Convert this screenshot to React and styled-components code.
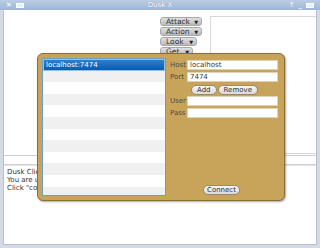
import React from 'react';
import styled, { createGlobalStyle } from 'styled-components';

const Global = createGlobalStyle`
  html, body { margin: 0; padding: 0; background: #dde3ec; }
  body { font-family: "DejaVu Sans", "Liberation Sans", sans-serif; }
`;

const Frame = styled.div`
  width: 320px;
  height: 248px;
  display: flex;
  flex-direction: column;
  position: relative;
  overflow: hidden;
  background: #d3dae5;
`;

const TitleBar = styled.div`
  height: 10px;
  display: flex;
  align-items: center;
  padding: 0 4px;
  background: linear-gradient(#bccde4, #9eb5d5);
  color: #fff;
  font-size: 7px;
`;

const TitleIcons = styled.div`
  display: flex;
  gap: 4px;
  width: 40px;
  justify-content: ${p => (p.right ? 'flex-end' : 'flex-start')};
  align-items: center;
  padding: 0 2px;
`;

const TitleText = styled.div`
  flex: 1;
  text-align: center;
  text-shadow: 0 0 1px #6d84a6;
`;

const Glyph = styled.span`
  font-size: 7px;
  line-height: 7px;
  color: #fff;
`;

const WinBox = styled.span`
  width: 8px;
  height: 5px;
  border: 1px solid #fff;
  background: #e9eef6;
  box-sizing: border-box;
`;

const Body = styled.div`
  flex: 1;
  background: #fff;
  margin: 0 3px 3px 3px;
  border: 1px solid #b8c0cc;
  border-top: none;
  display: flex;
  flex-direction: column;
`;

const Top = styled.div`
  height: 144px;
  display: grid;
  grid-template-columns: 156px 46px 1fr;
`;

const MenuCol = styled.div`
  display: flex;
  flex-direction: column;
  gap: 1px;
  padding-top: 7px;
`;

const MenuButton = styled.div`
  width: ${p => p.w}px;
  height: 9px;
  border-radius: 3px;
  background: linear-gradient(#e2e2e2, #b9b9b9);
  border: 1px solid #a8a8a8;
  box-sizing: border-box;
  display: flex;
  align-items: center;
  justify-content: space-between;
  padding: 0 3px 0 5px;
  font-size: 7.5px;
  color: #333;
`;

const Arrow = styled.span`
  font-size: 5px;
  color: #222;
`;

const SideText = styled.div`
  margin: 6px 0 0 4px;
  border: 1px solid #d8d8d8;
  border-right: none;
  background: #fff;
`;

const InputLine = styled.div`
  height: 8px;
  margin-top: 1px;
  border-top: 1px solid #d0d0d0;
  border-bottom: 1px solid #d0d0d0;
`;

const Log = styled.div`
  flex: 1;
  padding: 2px 3px;
  font-size: 7px;
  line-height: 8px;
  color: #333;
  border-top: 1px solid #e4e4e4;
`;

const Dialog = styled.div`
  position: absolute;
  left: 37px;
  top: 53px;
  width: 248px;
  height: 148px;
  box-sizing: border-box;
  background: #c8a45b;
  border: 1px solid #8c6d36;
  border-radius: 6px;
  box-shadow: 1px 1px 2px rgba(0, 0, 0, 0.35);
  display: grid;
  grid-template-columns: 124px 1fr;
  gap: 4px;
  padding: 4px 6px 4px 4px;
`;

const List = styled.div`
  background: #fff;
  border: 1px solid #6d9dc4;
  display: flex;
  flex-direction: column;
  overflow: hidden;
`;

const Row = styled.div`
  height: 11.6px;
  flex: none;
  font-size: 7px;
  line-height: 10px;
  padding-left: 2px;
  color: ${p => (p.selected ? '#fff' : '#333')};
  background: ${p =>
    p.selected ? 'linear-gradient(#2c7fd0, #0a5bb0)' : p.odd ? '#f0f0f0' : '#fff'};
  border: ${p => (p.selected ? '1px solid #8fc0ee' : 'none')};
  box-sizing: border-box;
`;

const Form = styled.div`
  display: flex;
  flex-direction: column;
  padding-top: 2px;
`;

const Field = styled.div`
  display: flex;
  align-items: center;
  height: 10px;
  margin-bottom: ${p => p.mb || 2}px;
`;

const Label = styled.span`
  width: 17px;
  font-size: 7px;
  color: #4a4a4a;
`;

const Input = styled.div`
  flex: 1;
  height: 10px;
  box-sizing: border-box;
  background: #fff;
  border: 1px solid #e2d3b0;
  font-size: 7px;
  line-height: 8px;
  padding-left: 2px;
  color: #333;
`;

const ButtonRow = styled.div`
  display: flex;
  gap: 1px;
  padding-left: 21px;
  margin: 1px 0 1px;
`;

const Pill = styled.div`
  height: 10px;
  padding: 0 ${p => p.px || 4}px;
  border-radius: 5px;
  box-sizing: border-box;
  background: linear-gradient(#f7f7f7, #d9d9d9);
  border: 1px solid #9c8a66;
  font-size: 7px;
  line-height: 8px;
  color: #333;
  text-align: center;
`;

const Spacer = styled.div`
  flex: 1;
`;

const ConnectRow = styled.div`
  display: flex;
  padding-left: 33px;
  margin-bottom: 1px;
`;

const rows = Array.from({ length: 12 });

export default function App() {
  return (
    <Frame>
      <Global />
      <TitleBar>
        <TitleIcons>
          <Glyph>✕</Glyph>
          <WinBox />
        </TitleIcons>
        <TitleText>Dusk X</TitleText>
        <TitleIcons right>
          <Glyph>↑</Glyph>
          <Glyph>_</Glyph>
          <WinBox />
        </TitleIcons>
      </TitleBar>
      <Body>
        <Top>
          <div />
          <MenuCol>
            <MenuButton w={42}>Attack<Arrow>▼</Arrow></MenuButton>
            <MenuButton w={42}>Action<Arrow>▼</Arrow></MenuButton>
            <MenuButton w={37}>Look<Arrow>▼</Arrow></MenuButton>
            <MenuButton w={33}>Get<Arrow>▼</Arrow></MenuButton>
          </MenuCol>
          <SideText />
        </Top>
        <InputLine />
        <Log>
          Dusk Client<br />
          You are using Dusk X<br />
          Click "connect" to start
        </Log>
      </Body>
      <Dialog>
        <List>
          {rows.map((_, i) => (
            <Row key={i} selected={i === 0} odd={i % 2 === 1}>
              {i === 0 ? 'localhost:7474' : ''}
            </Row>
          ))}
        </List>
        <Form>
          <Field><Label>Host</Label><Input>localhost</Input></Field>
          <Field mb={2}><Label>Port</Label><Input>7474</Input></Field>
          <ButtonRow>
            <Pill px={5}>Add</Pill>
            <Pill px={5}>Remove</Pill>
          </ButtonRow>
          <Field><Label>User</Label><Input /></Field>
          <Field><Label>Pass</Label><Input /></Field>
          <Spacer />
          <ConnectRow>
            <Pill px={3}>Connect</Pill>
          </ConnectRow>
        </Form>
      </Dialog>
    </Frame>
  );
}
